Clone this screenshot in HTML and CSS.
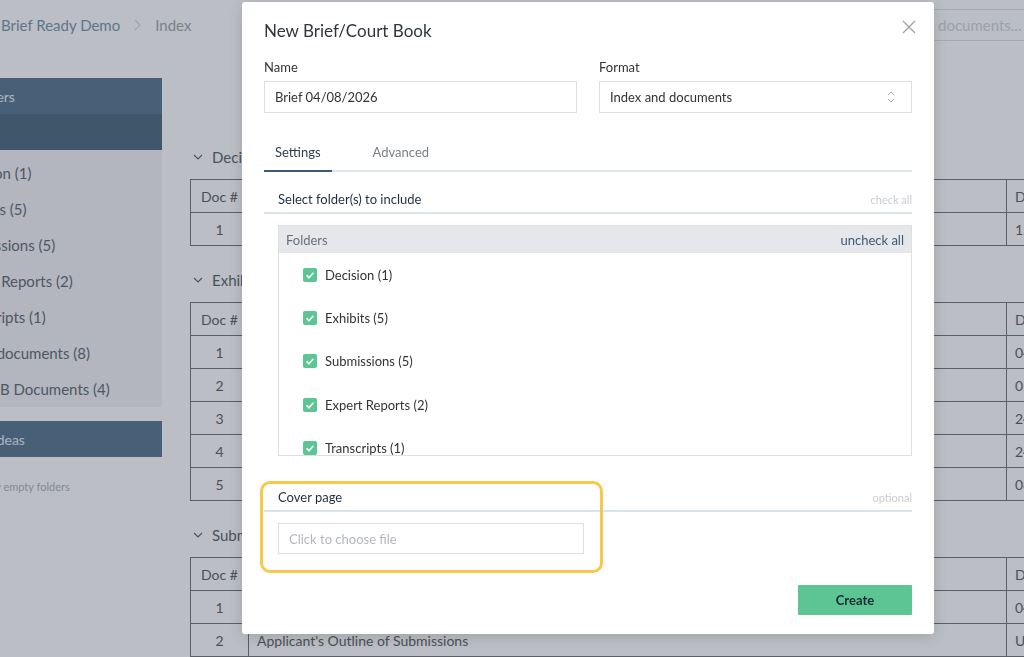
FILE: index.html
```html
<!DOCTYPE html>
<html lang="en">
<head>
  <meta charset="UTF-8">
  <title>Brief Ready Demo – Index</title>
  <meta name="viewport" content="width=device-width, initial-scale=1.0">
  <link rel="stylesheet" href="styles.css">
</head>
<body>
  <div class="app">
    <header class="topbar">
      <nav class="crumbs">
        <span class="crumb-link">Brief Ready Demo</span>
        <svg class="crumb-sep" width="7" height="12" viewBox="0 0 7 12"><path d="M1 1l5 5-5 5" fill="none" stroke="currentColor" stroke-width="1.2"/></svg>
        <span class="crumb-current">Index</span>
      </nav>
      <input class="search" type="text" placeholder="Search documents...">
    </header>

    <div class="workspace">
      <aside class="sidebar">
        <div class="side-head">Folders</div>
        <div class="side-head dark">All</div>
        <ul class="side-list">
          <li>Decision (1)</li>
          <li>Exhibits (5)</li>
          <li>Submissions (5)</li>
          <li>Expert Reports (2)</li>
          <li>Transcripts (1)</li>
          <li>Other documents (8)</li>
          <li>Annex B Documents (4)</li>
        </ul>
        <div class="side-head">My ideas</div>
        <div class="side-note">Show empty folders</div>
      </aside>

      <main class="index">
        <section class="doc-section">
          <h3 class="section-head"><svg width="10" height="6" viewBox="0 0 10 6"><path d="M1 1l4 4 4-4" fill="none" stroke="currentColor" stroke-width="1.1"/></svg>Decision</h3>
          <table class="doc-table">
            <colgroup><col class="c-num"><col class="c-title"><col class="c-date"></colgroup>
            <tr><th>Doc #</th><th class="left">Title</th><th class="left">Date</th></tr>
            <tr><td>1</td><td class="left">Decision of the Tribunal</td><td class="left">12/06/2020</td></tr>
          </table>
        </section>

        <section class="doc-section">
          <h3 class="section-head"><svg width="10" height="6" viewBox="0 0 10 6"><path d="M1 1l4 4 4-4" fill="none" stroke="currentColor" stroke-width="1.1"/></svg>Exhibits</h3>
          <table class="doc-table">
            <colgroup><col class="c-num"><col class="c-title"><col class="c-date"></colgroup>
            <tr><th>Doc #</th><th class="left">Title</th><th class="left">Date</th></tr>
            <tr><td>1</td><td class="left">Statement of Facts</td><td class="left">04/03/2019</td></tr>
            <tr><td>2</td><td class="left">Letter of Offer</td><td class="left">05/03/2019</td></tr>
            <tr><td>3</td><td class="left">Email Correspondence</td><td class="left">24/04/2019</td></tr>
            <tr><td>4</td><td class="left">Medical Certificate</td><td class="left">24/04/2019</td></tr>
            <tr><td>5</td><td class="left">Payslips</td><td class="left">08/05/2019</td></tr>
          </table>
        </section>

        <section class="doc-section">
          <h3 class="section-head"><svg width="10" height="6" viewBox="0 0 10 6"><path d="M1 1l4 4 4-4" fill="none" stroke="currentColor" stroke-width="1.1"/></svg>Submissions</h3>
          <table class="doc-table">
            <colgroup><col class="c-num"><col class="c-title"><col class="c-date"></colgroup>
            <tr><th>Doc #</th><th class="left">Title</th><th class="left">Date</th></tr>
            <tr><td>1</td><td class="left">Respondent's Submissions</td><td class="left">04/06/2019</td></tr>
            <tr><td>2</td><td class="left">Applicant's Outline of Submissions</td><td class="left">Undated</td></tr>
          </table>
        </section>
      </main>
    </div>
  </div>

  <div class="backdrop"></div>

  <div class="modal">
    <h2 class="modal-title">New Brief/Court Book</h2>
    <button class="modal-close" type="button">
      <svg width="14" height="14" viewBox="0 0 14 14"><path d="M1 1l12 12M13 1L1 13" fill="none" stroke="currentColor" stroke-width="1.2"/></svg>
    </button>

    <div class="form-row">
      <label class="field">
        <span class="field-label">Name</span>
        <input class="text-input" type="text" value="Brief 04/08/2026">
      </label>
      <label class="field">
        <span class="field-label">Format</span>
        <span class="select">
          Index and documents
          <svg width="8" height="12" viewBox="0 0 8 12"><path d="M1 4l3-3 3 3M1 8l3 3 3-3" fill="none" stroke="currentColor" stroke-width="1"/></svg>
        </span>
      </label>
    </div>

    <div class="tabs">
      <span class="tab active">Settings</span>
      <span class="tab">Advanced</span>
    </div>

    <div class="group-head">
      <span class="group-title">Select folder(s) to include</span>
      <span class="group-aside">check all</span>
    </div>

    <div class="folder-box">
      <div class="folder-box-head">
        <span>Folders</span>
        <span class="link">uncheck all</span>
      </div>
      <ul class="folder-list">
        <li><span class="check"></span>Decision (1)</li>
        <li><span class="check"></span>Exhibits (5)</li>
        <li><span class="check"></span>Submissions (5)</li>
        <li><span class="check"></span>Expert Reports (2)</li>
        <li><span class="check"></span>Transcripts (1)</li>
        <li><span class="check"></span>Other documents (8)</li>
        <li><span class="check"></span>Annex B Documents (4)</li>
      </ul>
    </div>

    <div class="group-head cover">
      <span class="group-title">Cover page</span>
      <span class="group-aside">optional</span>
    </div>
    <div class="file-input">Click to choose file</div>

    <div class="modal-foot">
      <button class="btn-create" type="button">Create</button>
    </div>

    <div class="highlight"></div>
  </div>
</body>
</html>
```

FILE: styles.css
```css
* {
  box-sizing: border-box;
}
html, body {
  height: 100%;
}
body {
  margin: 0;
  font-family: Lato, "Noto Sans", sans-serif;
  color: #333;
  background: #fff;
  overflow: hidden;
}

/* page behind the dialog */
.app {
  height: 100vh;
  display: flex;
  flex-direction: column;
}
.topbar {
  height: 50px;
  flex-shrink: 0;
  display: flex;
  align-items: center;
  justify-content: space-between;
  padding-left: 1px;
}
.crumbs {
  display: flex;
  align-items: center;
  gap: 12px;
  font-size: 15px;
}
.crumb-link {
  color: #7792a8;
}
.crumb-sep {
  color: #d6d9dd;
  margin: 0 2px;
}
.crumb-current {
  color: #a3a6a9;
}
.search {
  width: 170px;
  height: 32px;
  margin-right: -25px;
  padding: 0 10px;
  border: 1px solid #dfe1e4;
  font: 15px Lato, sans-serif;
  color: #555;
}
.search::placeholder {
  color: #d1d4d5;
}
.workspace {
  flex: 1;
  display: flex;
  min-height: 0;
}
.sidebar {
  width: 210px;
  flex-shrink: 0;
  margin-left: -48px;
  padding-top: 28px;
}
.side-head {
  height: 36px;
  display: flex;
  align-items: center;
  padding-left: 18px;
  background: #53738d;
  color: #e8eef3;
  font-size: 14px;
}
.side-head.dark {
  background: #47647b;
}
.side-list {
  list-style: none;
  margin: 0 0 14px;
  padding: 5px 0 0;
  background: #f3f4f6;
}
.side-list li {
  height: 36px;
  display: flex;
  align-items: center;
  padding-left: 2px;
  font-size: 15px;
  color: #5d6672;
}
.side-note {
  margin-top: 22px;
  padding-left: 22px;
  font-size: 11px;
  line-height: 16px;
  color: #aeb1b4;
}
.index {
  flex: 1;
  min-width: 0;
  padding: 97px 0 0 28px;
}
.section-head {
  display: flex;
  align-items: center;
  gap: 9px;
  height: 20px;
  margin: 0 0 12px;
  padding-left: 3px;
  font-size: 15px;
  font-weight: 400;
  color: #575e66;
}
.doc-table {
  border-collapse: collapse;
  table-layout: fixed;
  width: 940px;
  margin-bottom: 24px;
  font-size: 14px;
  color: #585b5e;
}
.c-num { width: 58px; }
.c-title { width: 758px; }
.c-date { width: 124px; }
.doc-table th,
.doc-table td {
  height: 33px;
  padding: 0 8px;
  border: 1px solid #717376;
  font-weight: 400;
  text-align: center;
  white-space: nowrap;
}
.doc-table .left {
  text-align: left;
}

/* dialog */
.backdrop {
  position: fixed;
  inset: 0;
  background: rgba(49, 58, 77, 0.33);
}
.modal {
  position: absolute;
  left: 242px;
  top: 2px;
  width: 692px;
  padding: 17px 22px 19px;
  background: #fff;
  border-radius: 3px;
  box-shadow: 0 3px 14px rgba(0, 0, 0, 0.14);
}
.modal-title {
  margin: 0;
  font-size: 17px;
  line-height: 24px;
  font-weight: 400;
  color: #2f363d;
}
.modal-close {
  position: absolute;
  top: 18px;
  right: 18px;
  padding: 0;
  border: none;
  background: none;
  color: #9b9fa4;
  line-height: 0;
}
.form-row {
  display: grid;
  grid-template-columns: 1fr 1fr;
  gap: 22px;
  margin-top: 16px;
}
.field {
  display: flex;
  flex-direction: column;
}
.field-label {
  font-size: 13px;
  line-height: 16px;
  margin-bottom: 6px;
  color: #333;
}
.text-input,
.select {
  height: 32px;
  padding: 0 10px;
  border: 1px solid #dcdfe3;
  font: 13px Lato, sans-serif;
  color: #333;
}
.select {
  display: flex;
  align-items: center;
  justify-content: space-between;
  padding-right: 16px;
}
.select svg {
  color: #a8acb1;
}
.tabs {
  display: flex;
  margin-top: 21px;
  border-bottom: 2px solid #e1e8ed;
}
.tab {
  padding: 10px 11px;
  font-size: 13px;
  line-height: 16px;
  color: #7a7f86;
}
.tab + .tab {
  margin-left: 30px;
}
.tab.active {
  color: #2c3e50;
  border-bottom: 2px solid #3c5a74;
  margin-bottom: -2px;
}
.group-head {
  display: flex;
  align-items: baseline;
  justify-content: space-between;
  margin-top: 19px;
  padding: 0 0 5px 14px;
  border-bottom: 2px solid #d8e3ea;
}
.group-head.cover {
  margin-top: 33px;
}
.group-title {
  font-size: 13px;
  line-height: 16px;
  color: #1f2f3f;
}
.group-aside {
  font-size: 11px;
  color: #c9cdd2;
}
.folder-box {
  height: 231px;
  margin: 11px 0 0 14px;
  border: 1px solid #dcdfe3;
  overflow: hidden;
}
.folder-box-head {
  height: 27px;
  display: flex;
  align-items: center;
  justify-content: space-between;
  padding: 0 7px;
  background: #e5e7eb;
  font-size: 13px;
  color: #6b7077;
}
.folder-box-head .link {
  color: #3d5a75;
}
.folder-list {
  list-style: none;
  margin: 0;
  padding: 0;
}
.folder-list li {
  height: 43.4px;
  display: flex;
  align-items: center;
  gap: 8px;
  padding-left: 24px;
  font-size: 13px;
  color: #333;
}
.check {
  width: 14px;
  height: 14px;
  border-radius: 2px;
  background: #5bc593 url("data:image/svg+xml,%3Csvg xmlns='http://www.w3.org/2000/svg' viewBox='0 0 14 14'%3E%3Cpath d='M3.6 7.3l2.3 2.4 4.5-5' fill='none' stroke='white' stroke-width='1.6'/%3E%3C/svg%3E") center / 14px no-repeat;
}
.file-input {
  width: 306px;
  height: 31px;
  margin: 11px 0 0 14px;
  padding-left: 10px;
  display: flex;
  align-items: center;
  border: 1px solid #dcdfe3;
  font-size: 13px;
  color: #b3b7bd;
}
.modal-foot {
  display: flex;
  justify-content: flex-end;
  margin-top: 31px;
}
.btn-create {
  width: 114px;
  height: 30px;
  border: none;
  border-radius: 1px;
  background: #5cc593;
  font: 700 13px Lato, sans-serif;
  color: #1c2a36;
}
.highlight {
  position: absolute;
  left: 18px;
  top: 479px;
  width: 343px;
  height: 92px;
  border: 3px solid #f7c948;
  border-radius: 10px;
  pointer-events: none;
}
```
